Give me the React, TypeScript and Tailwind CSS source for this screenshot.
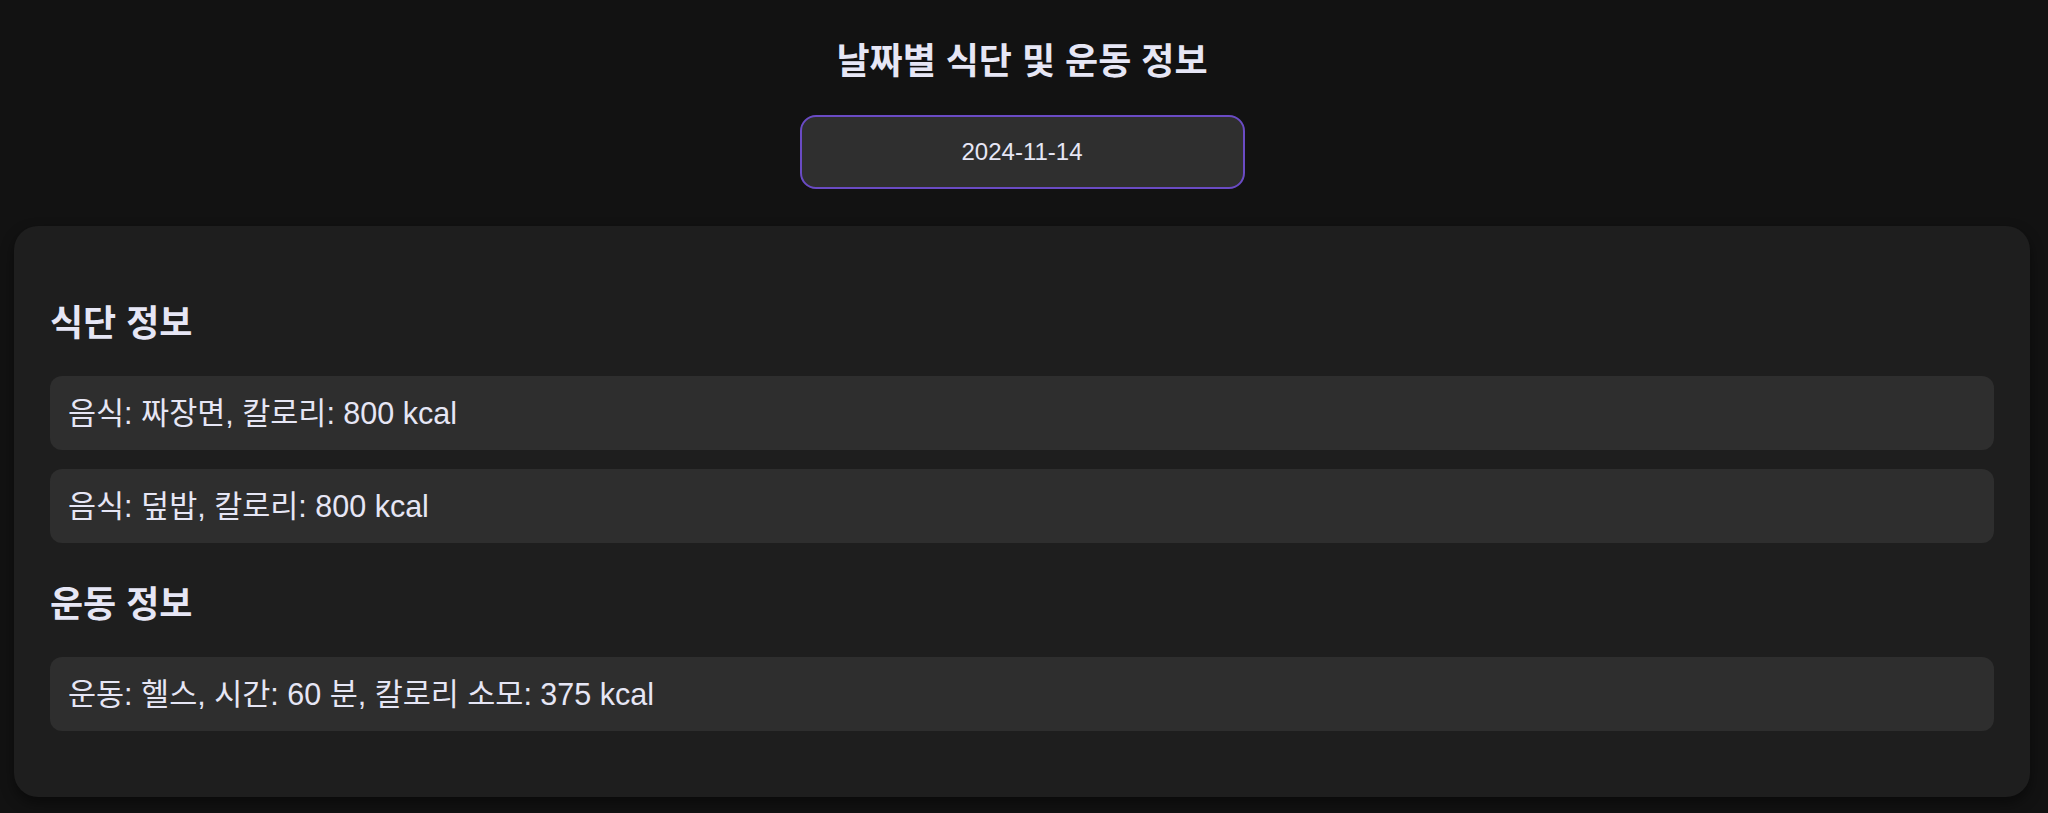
const meals = [
  { food: "짜장면", kcal: 800 },
  { food: "덮밥", kcal: 800 },
];

const workouts = [{ name: "헬스", minutes: 60, burned: 375 }];

const font = "font-['Liberation_Sans','Noto_Sans_CJK_KR',sans-serif]";

const App = () => {
  return (
    <div className={`bg-[#121212] min-h-screen pl-[14px] pr-[18px] pt-[42px] pb-[16px] text-[#e6e6f5] ${font}`}>
      <h1 className="text-center text-[36px] font-bold leading-[40px]">날짜별 식단 및 운동 정보</h1>

      <div className="flex justify-center mt-[33px]">
        <input
          type="text"
          readOnly
          value="2024-11-14"
          className="w-[445px] h-[74px] rounded-[16px] border-2 border-[#6a4bc4] bg-[#2f2f2f] text-center text-[24px] text-[#e6e6f5] outline-none"
        />
      </div>

      <div className="mt-[37px] bg-[#1e1e1e] rounded-[24px] px-[36px] pt-[78px] pb-[66px] shadow-[0_6px_14px_rgba(0,0,0,0.45)]">
        <h2 className="text-[36px] font-bold leading-[40px]">식단 정보</h2>
        <div className="mt-[32px] flex flex-col gap-[19px]">
          {meals.map((m) => (
            <div key={m.food} className="bg-[#2e2e2e] rounded-[12px] h-[74px] px-[18px] text-[30.5px] leading-[74px]">
              음식: {m.food}, 칼로리: {m.kcal} kcal
            </div>
          ))}
        </div>

        <h2 className="mt-[42px] text-[36px] font-bold leading-[40px]">운동 정보</h2>
        <div className="mt-[32px] flex flex-col gap-[19px]">
          {workouts.map((w) => (
            <div key={w.name} className="bg-[#2e2e2e] rounded-[12px] h-[74px] px-[18px] text-[30.5px] leading-[74px]">
              운동: {w.name}, 시간: {w.minutes} 분, 칼로리 소모: {w.burned} kcal
            </div>
          ))}
        </div>
      </div>
    </div>
  );
};

export default App;
